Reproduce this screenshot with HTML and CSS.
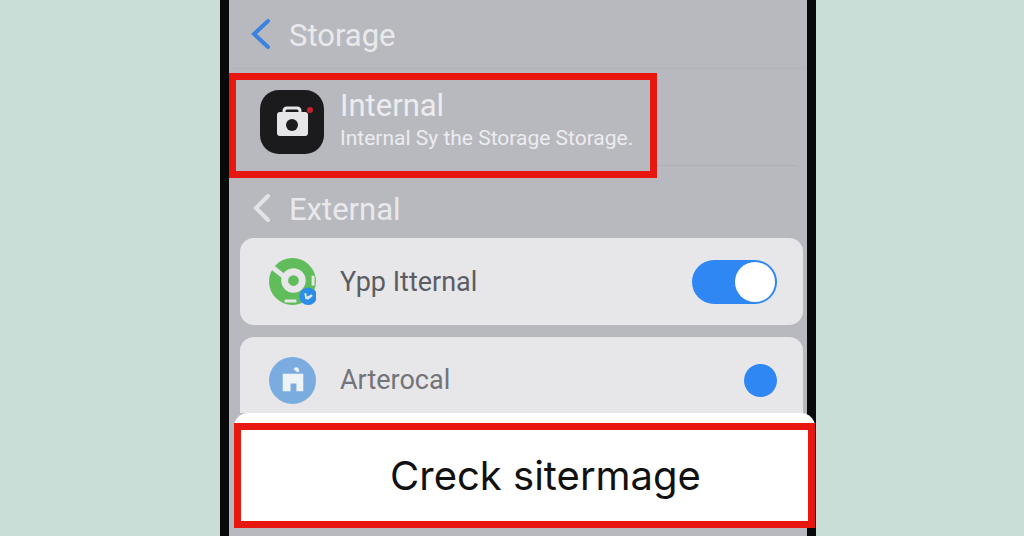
FILE: index.html
```html
<!DOCTYPE html>
<html lang="en">
<head>
    <meta charset="UTF-8">
    <meta name="viewport" content="width=device-width, initial-scale=1">
    <title>Storage</title>
    <link rel="stylesheet" href="styles.css">
</head>
<body>
    <main class="phone">
        <header class="bar">
            <a class="back" href="#" aria-label="Back">
                <svg width="20" height="32" viewBox="0 0 20 32"><path d="M17 2 3 15l14 13"/></svg>
            </a>
            <h1>Storage</h1>
        </header>

        <section class="storage">
            <a class="internal marked" href="#">
                <svg class="app-icon" viewBox="0 0 64 64">
                    <rect width="64" height="64" rx="19" fill="#1b1b1d"/>
                    <path d="M24 23v-2q0-3 3-3h10q3 0 3 3v2" fill="none" stroke="#e6e6e8" stroke-width="3"/>
                    <rect x="17" y="22" width="31" height="24" rx="3" fill="#e6e6e8"/>
                    <circle cx="32" cy="35" r="6" fill="#1b1b1d"/>
                    <circle cx="50" cy="20" r="3" fill="#c8202c"/>
                </svg>
                <span class="text">
                    <span class="title">Internal</span>
                    <span class="sub">Internal Sy the Storage Storage.</span>
                </span>
            </a>
            <hr>
        </section>

        <div class="bar external">
            <a class="back" href="#" aria-label="Back">
                <svg width="20" height="32" viewBox="0 0 20 32"><path d="M17 3 5 15l12 12"/></svg>
            </a>
            <h2>External</h2>
        </div>

        <div class="card">
            <svg class="row-icon" viewBox="0 0 48 48">
                <circle cx="24" cy="24" r="24" fill="#61bd5b"/>
                <path d="m4 10 14 11" stroke="#e7e7e9" stroke-width="5"/>
                <path d="M45 18v10M16 44h12" stroke="#e7e7e9" stroke-width="3"/>
                <circle cx="25" cy="23" r="9" fill="#61bd5b" stroke="#e7e7e9" stroke-width="7"/>
                <circle cx="40" cy="39" r="9" fill="#2c8ce6"/>
                <path d="m37 36 1 5 6-3-5 4" fill="none" stroke="#d5ebfb" stroke-width="2"/>
            </svg>
            <label for="app">Ypp Itternal</label>
            <input class="switch" id="app" type="checkbox" role="switch" checked>
        </div>

        <div class="card last">
            <svg class="row-icon" viewBox="0 0 48 48">
                <circle cx="24" cy="24" r="24" fill="#7aacdf"/>
                <path d="M14 17h21v18h-7v-8h-6v8h-8z" fill="#eef3f8"/>
                <path d="M25 12q5-4 6 3h-3z" fill="#eef3f8"/>
            </svg>
            <label for="art">Arterocal</label>
            <input class="dot" id="art" type="radio" checked>
        </div>

        <div class="sheet">
            <button class="marked" type="button">Creck sitermage</button>
        </div>
    </main>
</body>
</html>
```
FILE: styles.css
```css
* {
    box-sizing: border-box;
}

body {
    margin: 0;
    padding-left: 12px;
    background: #c9ded6;
    font-family: Roboto, "Liberation Sans", sans-serif;
}

.phone {
    max-width: 596px;
    min-height: 100vh;
    margin: 0 auto;
    border: solid #08090b;
    border-width: 0 9px;
    background: #b8b9be;
}

h1,
h2 {
    margin: 0;
    font-size: 31px;
    font-weight: 400;
}

.bar {
    display: flex;
    align-items: center;
    gap: 18px;
    height: 68px;
    padding: 2px 22px 0;
    color: #e9e9ed;
}

.bar.external {
    height: 60px;
}

.back {
    display: flex;
    color: #3c82e0;
}

.external .back {
    color: #e4e4e8;
}

.back svg {
    fill: none;
    stroke: currentColor;
    stroke-width: 4;
    stroke-linecap: round;
}

.storage {
    display: flex;
    align-items: flex-end;
    padding-top: 4px;
    border-top: 1px solid #b3b4b9;
}

.storage hr {
    flex: 1;
    margin: 0 10px 12px 0;
    border: 0;
    border-top: 1px solid #b0b1b6;
}

.marked {
    border: 7px solid #e8170f;
}

.internal {
    display: flex;
    align-items: center;
    gap: 16px;
    width: 74%;
    min-height: 105px;
    padding: 0 0 10px 24px;
    color: #ececf0;
    text-decoration: none;
    white-space: nowrap;
}

.app-icon {
    flex: none;
    width: 64px;
    margin-top: 2px;
}

.title,
.sub {
    display: block;
}

.title {
    font-size: 31px;
    line-height: 34px;
}

.sub {
    font-size: 21px;
    line-height: 30px;
}

.card {
    display: flex;
    align-items: center;
    gap: 24px;
    height: 87px;
    margin: 0 4px 12px 11px;
    padding: 0 26px 0 29px;
    border-radius: 14px;
    background: #e7e7e9;
    color: #5c5d62;
    font-size: 27px;
}

.card.last {
    height: 76px;
    margin-bottom: 0;
    padding-top: 10px;
    border-radius: 14px 14px 0 0;
    color: #737479;
}

.row-icon {
    flex: none;
    width: 47px;
}

.card label {
    flex: 1;
}

.switch,
.dot {
    appearance: none;
    margin: 0;
    border-radius: 22px;
    background: #2e87f3;
}

.switch {
    display: flex;
    justify-content: flex-end;
    width: 85px;
    height: 44px;
    padding: 2px;
}

.switch::before {
    content: "";
    width: 40px;
    border-radius: 50%;
    background: #fff;
}

.switch:not(:checked) {
    justify-content: flex-start;
    background: #a5a6ab;
}

.dot {
    width: 33px;
    height: 33px;
}

.sheet {
    position: relative;
    margin: 0 -8px 0 5px;
    padding-top: 10px;
    border-radius: 14px 14px 0 0;
    background: #fff;
}

.sheet button {
    display: block;
    width: 100%;
    height: 105px;
    padding: 0 0 0 42px;
    background: #fff;
    color: #111;
    font-family: Inter, "Liberation Sans", sans-serif;
    font-size: 40px;
}
```
